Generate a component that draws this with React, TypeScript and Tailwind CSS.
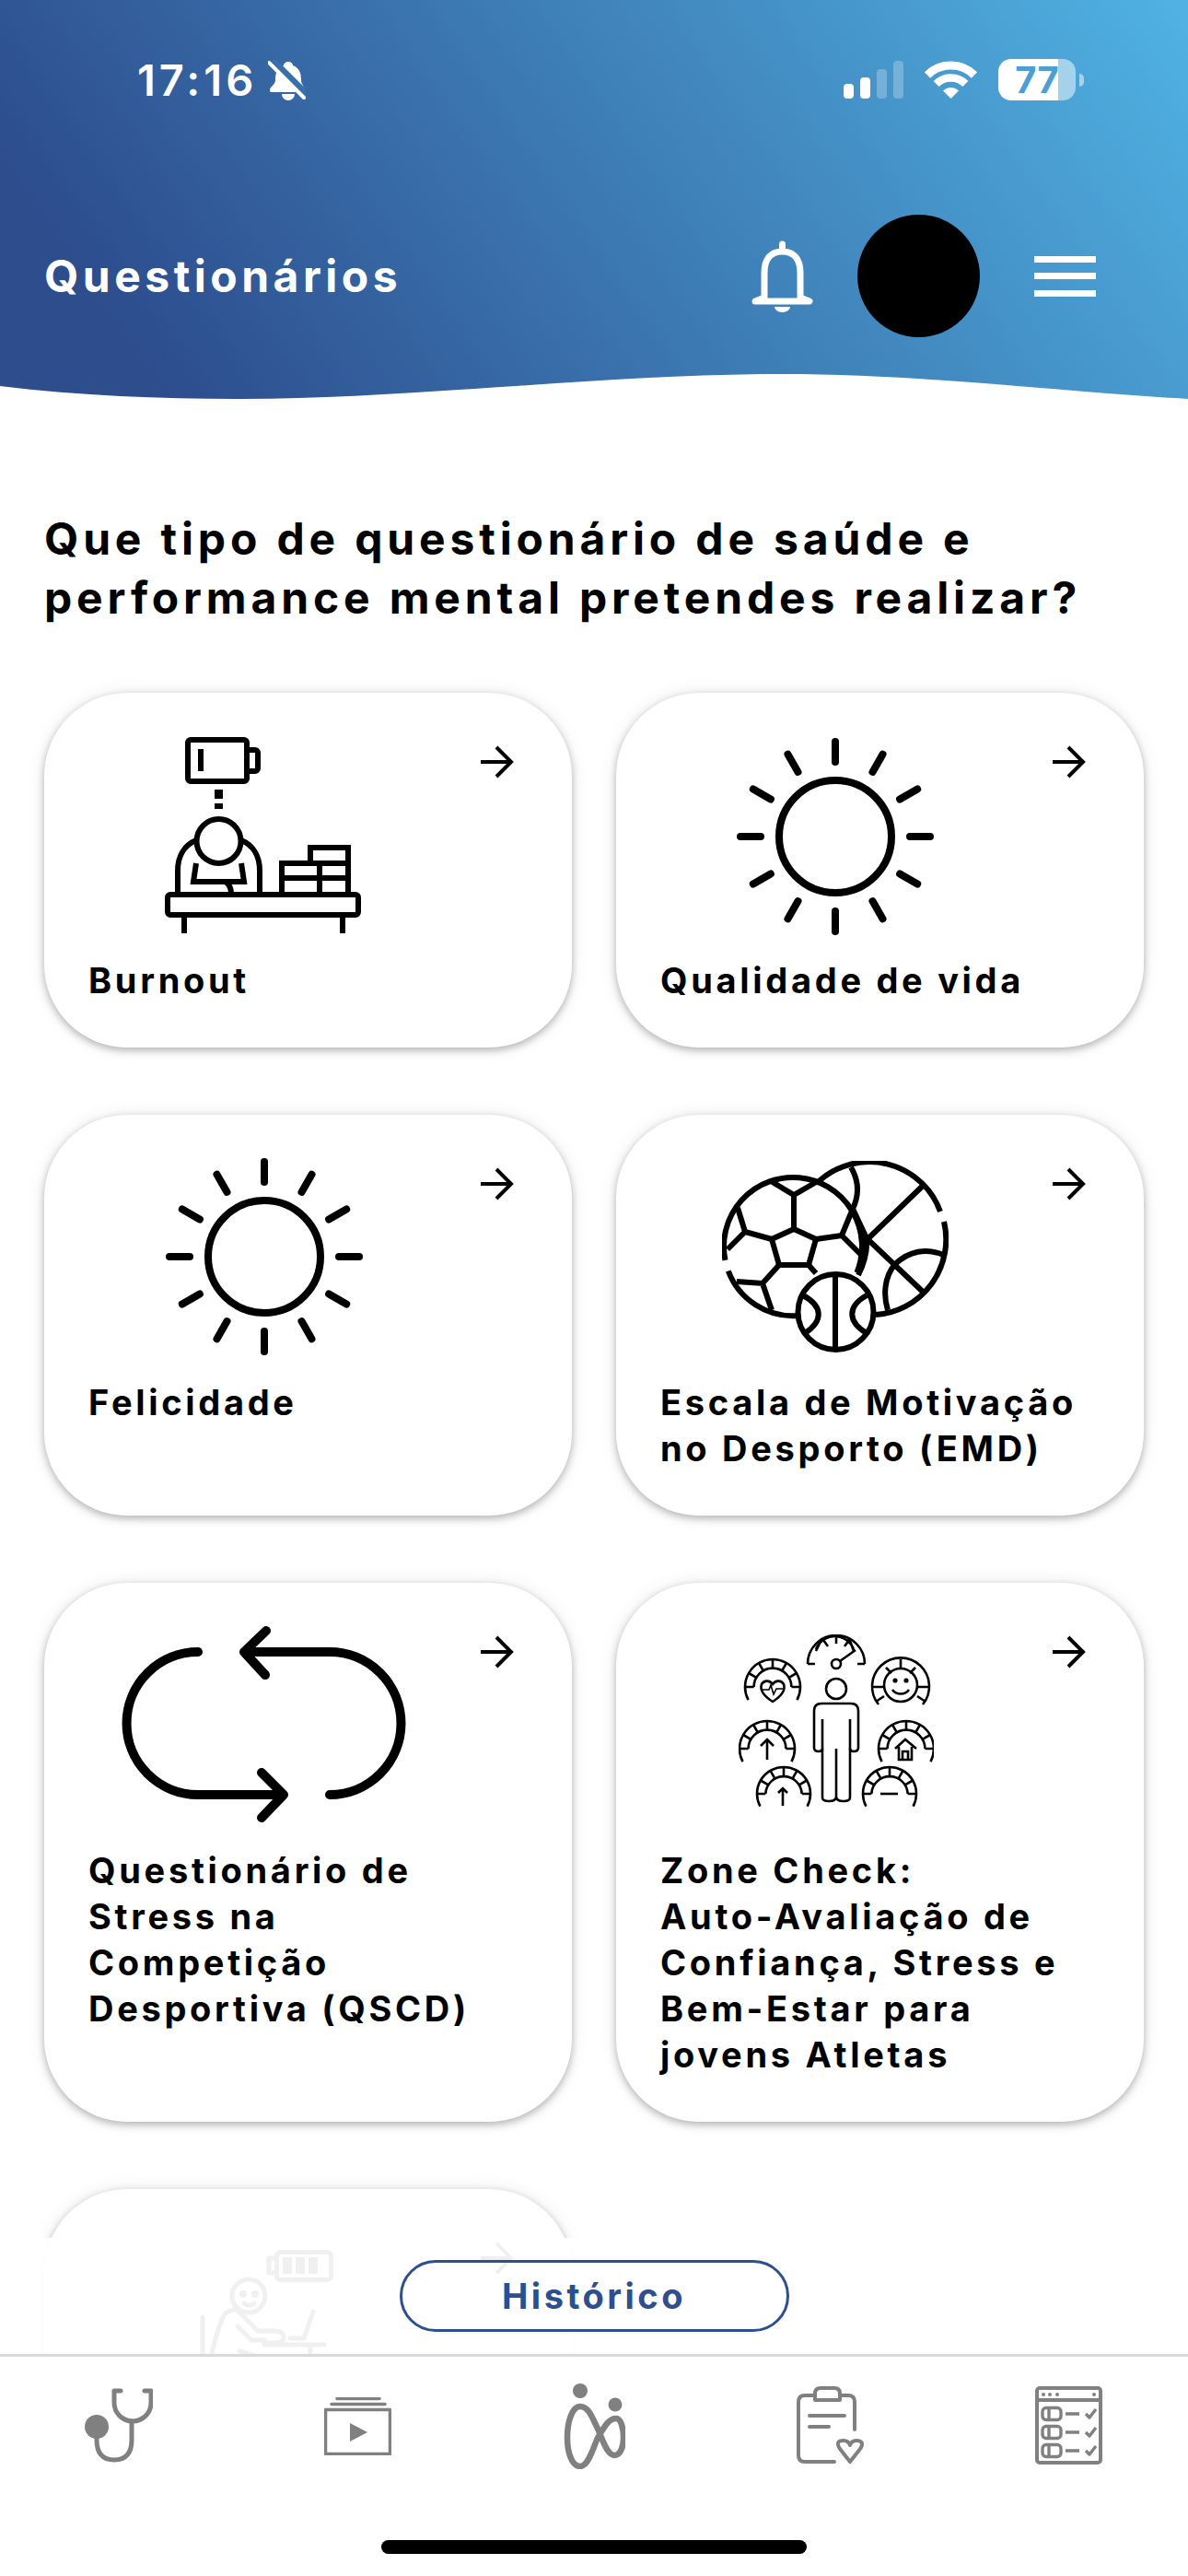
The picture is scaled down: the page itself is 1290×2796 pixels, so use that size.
const TITLE_FONT = "font-['Inter',sans-serif]"

const polar = (cx: number, cy: number, r: number, deg: number) => {
  const a = (deg * Math.PI) / 180
  return [cx + r * Math.cos(a), cy + r * Math.sin(a)].map((n) => n.toFixed(1)).join(' ')
}

function ArrowRight() {
  return (
    <svg viewBox="0 0 36 36" className="absolute right-[63px] top-[57px] h-[36px] w-[36px]" fill="none" stroke="#000" strokeWidth="4">
      <path d="M0 18H33M17 2L33 18L17 34" />
    </svg>
  )
}

function BurnoutIcon() {
  return (
    <svg viewBox="0 0 213 213" className="h-[213px] w-[213px]" fill="none" stroke="#000" strokeWidth="6">
      <rect x="25" y="3" width="64" height="45" rx="3" />
      <path d="M90 14H98a3 3 0 0 1 3 3V34a3 3 0 0 1-3 3H90" />
      <rect x="36" y="13" width="6" height="24" fill="#000" stroke="none" />
      <rect x="54" y="57" width="9" height="10" fill="#000" stroke="none" />
      <rect x="54" y="72" width="9" height="6" fill="#000" stroke="none" />
      <ellipse cx="58.5" cy="113" rx="24" ry="24" />
      <path d="M14 170V145C14 128 22 117 34 112M103 170V145C103 128 95 117 83 112" />
      <path d="M34 137L31 157H86L83 137M66 157C70 160 72 164 72 170" />
      <rect x="3" y="171" width="207" height="22" rx="3" />
      <path d="M21 195V213M193 195V213" />
      <path d="M127 170V137H168V170M127 153H168" />
      <path d="M158 137V120H199V170M168 137H199M168 153H199" />
    </svg>
  )
}

function SunIcon() {
  const rays = [0, 30, 60, 90, 120, 150, 180, 210, 240, 270, 300, 330]
  return (
    <svg viewBox="-108 -108 216 216" className="h-[216px] w-[216px]" fill="none" stroke="#000" strokeWidth="8" strokeLinecap="round">
      <circle r="61" />
      {rays.map((deg) => (
        <path key={deg} d={`M${polar(0, 0, 81, deg)}L${polar(0, 0, 103, deg)}`} />
      ))}
    </svg>
  )
}

function BallsIcon() {
  return (
    <svg viewBox="0 0 246 208" className="h-[208px] w-[246px]" fill="none" stroke="#000" strokeWidth="6">
      <path d="M105.6 21.7A82 82 0 0 1 237 55M241 66A82 82 0 0 1 167 167" />
      <path d="M82 168A75 75 0 0 1 6.800 119.500M3.500 107.900A75 75 0 1 1 146.400 121.400" />
      <path d="M78 74L102 85L94 113H62L54 85Z" />
      <path d="M78 74V37M53 22L78 37L104 22M54 85L25 77L17 51M25 77L6 96M102 85L130 81L142 52M130 81L151 102M62 113L44 133L16 131M44 133L54 162M94 113L102 122" />
      <path d="M140 7C149 22 149 37 142 52L157 84L218 142M217 28L157 86C158 100 154 112 148 124" />
      <path d="M240 102C222 94 203 98 188 112C176 126 175 146 180 162" />
      <circle cx="123.5" cy="164" r="41" fill="#fff" />
      <path d="M123 124V204M88 146C110 158 110 174 90 187M157 146C136 158 136 174 157 187" />
    </svg>
  )
}

function LoopIcon() {
  return (
    <svg viewBox="0 0 310 213" className="h-[213px] w-[310px]" fill="none" stroke="#000" strokeWidth="10" strokeLinecap="round" strokeLinejoin="round">
      <path d="M83 28A77.500 77.500 0 0 0 83 183H176M152 159L176 183L152 208" />
      <path d="M226 183A77.500 77.500 0 0 0 226 28H133M157 5L133 28L156 53" />
    </svg>
  )
}

function Gauge({ cx, cy, R, ext = 28 }: { cx: number; cy: number; R: number; ext?: number }) {
  const r = R * 0.68
  const ticks = [-150, -120, -90, -60, -30]
  return (
    <g>
      <path d={`M${polar(cx, cy, R, 180 - ext)}A${R} ${R} 0 1 1 ${polar(cx, cy, R, ext)}`} />
      <path d={`M${polar(cx, cy, r, 180)}A${r} ${r} 0 0 1 ${polar(cx, cy, r, 0)}`} />
      <path d={`M${cx - R} ${cy}H${cx - r}M${cx + r} ${cy}H${cx + R}`} />
      {ticks.map((deg) => (
        <path key={deg} d={`M${polar(cx, cy, r, deg)}L${polar(cx, cy, R, deg)}`} />
      ))}
    </g>
  )
}

function ZoneIcon() {
  return (
    <svg viewBox="0 0 212 189" className="h-[189px] w-[212px]" fill="none" stroke="#000" strokeWidth="2.6">
      <path d="M75 32A31 31 0 0 1 137 32M75 32H83M129 32H137" />
      <path d="M84 16A22 22 0 0 1 125 16M84 18L91 4M125 18L120 4M106 1V10M92 6L97 13M120 6L115 13" />
      <circle cx="106" cy="32" r="5" />
      <path d="M110 29L127 17" />
      <Gauge cx={37} cy={57} R={30} />
      <path d="M37 73C26 66 23 60 25 54C28 49 34 50 37 54C40 50 46 49 49 54C51 60 48 66 37 73Z" />
      <path d="M26 60H33L35 55L38 65L41 59H48" strokeWidth="1.6" />
      <path d="M152 76A31 31 0 1 1 200 76" />
      <circle cx="176" cy="55" r="18" />
      <path d="M146 57H158M194 57H207M158 67L149 73M194 67L203 73M176 27V37M160 36L166 42M192 36L186 42" />
      <circle cx="170" cy="50" r="1.3" fill="#000" />
      <circle cx="182" cy="50" r="1.3" fill="#000" />
      <path d="M167 60C171 66 181 66 185 60" />
      <Gauge cx={31} cy={124} R={30} />
      <path d="M31 136V114M24 121L31 114L38 121" />
      <Gauge cx={182} cy={124} R={30} />
      <path d="M170 124L181 114L193 124M174 122V136H188V122M178 136V127H184V136" />
      <Gauge cx={49} cy={173} R={29} />
      <path d="M48 186V167M43 172L48 167L53 172" />
      <Gauge cx={164} cy={173} R={29} />
      <path d="M154 173H173" />
      <ellipse cx="106" cy="59" rx="11" ry="11" />
      <path d="M91 92V177Q91 181 98 181Q106 181 106 176V124V176Q106 181 114 181Q121 181 121 177V92" />
      <path d="M91 124Q91 127 87 127Q82 127 82 123V83Q82 75 90 75H122Q130 75 130 83V123Q130 127 125 127Q121 127 121 124" />
    </svg>
  )
}

function GhostIcon() {
  return (
    <svg viewBox="0 0 150 150" className="h-[150px] w-[150px]" fill="none" stroke="#000" strokeWidth="5" strokeLinecap="round" strokeLinejoin="round">
      <rect x="85.5" y="4.5" width="59" height="30" rx="4" />
      <path d="M83 11H77V27H83" />
      <path d="M92 10H102V28H92ZM106 10H116V28H106ZM120 10H130V28H120Z" fill="#000" stroke="none" />
      <circle cx="55" cy="52" r="18" />
      <circle cx="49" cy="50" r="1.5" fill="#000" />
      <circle cx="62" cy="50" r="1.5" fill="#000" />
      <path d="M50 60C53 63 58 63 61 60" />
      <path d="M5 75V130M15 115C18 100 23 84 28 73C32 68 37 67 42 67L65 90H85Q93 91 93 97Q93 103 85 103H72" />
      <path d="M43 85L58 100H72M72 105H137M125 69L115 98H100M122 105V130M45 112L72 120" />
    </svg>
  )
}

function Stethoscope() {
  return (
    <svg viewBox="0 0 74 81" className="mt-[34px] h-[81px] w-[74px]" fill="none" stroke="#808080" strokeWidth="5" strokeLinejoin="round" strokeLinecap="round">
      <path d="M39 3H32V16A20 20 0 0 0 72 16V3H65" />
      <path d="M51 36V56Q51 78 32 78Q13 78 13 56V44" />
      <circle cx="13" cy="42" r="13" fill="#808080" stroke="none" />
    </svg>
  )
}

function VideoStack() {
  return (
    <svg viewBox="0 0 73 63" className="mt-[44px] h-[63px] w-[73px]" fill="none" stroke="#808080" strokeWidth="3.5" strokeLinejoin="round" strokeLinecap="round">
      <path d="M14 1.5H60M8 7.5H66" />
      <rect x="1.5" y="13.5" width="70" height="48" />
      <path d="M28 28L47 38L28 48Z" fill="#808080" stroke="none" />
    </svg>
  )
}

function BrandLogo() {
  return (
    <svg viewBox="0 0 67 93" className="mt-[29px] h-[93px] w-[67px]" fill="none">
      <circle cx="18" cy="8" r="8" fill="#808080" />
      <circle cx="56" cy="23" r="7.5" fill="#808080" />
      <path
        d="M18 25C28 25 32 40 37 49C42 60 47 78 55 78C62 78 65 68 65 59C65 48 62 38 57 38C48 38 43 50 37 59C32 70 27 90 18 90C9 90 4 75 4 59C4 42 9 25 18 25Z"
        stroke="#808080"
        strokeWidth="6.5"
      />
    </svg>
  )
}

function ClipboardHeart() {
  return (
    <svg viewBox="0 0 73 85" className="mt-[32px] h-[85px] w-[73px]" fill="none" stroke="#808080" strokeWidth="4" strokeLinecap="round" strokeLinejoin="round">
      <path d="M20 10H9Q2 10 2 17V75Q2 82 9 82H41M47 10H56Q63 10 63 17V47" />
      <path d="M20 15V8Q20 2 26 2H41Q47 2 47 8V15Z" />
      <path d="M14 32H52M14 44H35" />
      <path d="M58 82L47 68C42 60 47 59 51 59C54 59 57 61 58 64C59 61 62 59 65 59C69 59 74 61 69 68Z" />
    </svg>
  )
}

function Checklist() {
  const rows = [30, 50, 70]
  return (
    <svg viewBox="0 0 73 85" className="mt-[32px] h-[85px] w-[73px]" fill="none" stroke="#808080" strokeWidth="4" strokeLinejoin="round">
      <rect x="2" y="2" width="69" height="81" rx="3" />
      <path d="M2 15H71" />
      <g fill="#808080" stroke="none">
        <circle cx="9" cy="9" r="2" />
        <circle cx="16" cy="9" r="2" />
        <circle cx="24" cy="9" r="2" />
        <circle cx="64" cy="9" r="2" />
      </g>
      {rows.map((y) => (
        <g key={y}>
          <rect x="8" y={y - 6.5} width="20" height="13" rx="4" strokeWidth="3.4" />
          <path d={`M15 ${y - 6}V${y + 6}M33 ${y}H48`} strokeWidth="3.4" />
          <path d={`M55 ${y}L59 ${y + 4}L66 ${y - 5}`} strokeWidth="3.4" />
        </g>
      ))}
    </svg>
  )
}

function StatusBar() {
  return (
    <div className="mt-[64px] flex h-[45px] items-center justify-between pl-[149px] pr-[113px] text-white">
      <div className="flex items-center gap-[12px]">
        <span className="font-['Inter',sans-serif] text-[47px] font-semibold leading-[45px] tracking-[4px]">17:16</span>
        <svg viewBox="0 0 41 44" className="h-[44px] w-[41px]">
          <path
            d="M22 2c-3 0-5 2-5 4C9 9 8 16 8 22C8 27 2 29 2 33c0 2 1 2 3 2H37c2 0 3 0 3-2C40 29 36 27 36 22C36 16 35 9 27 6c0-2-2-4-5-4zM15 37a7 7 0 0 0 14 0z"
            fill="#fff"
          />
          <path d="M4 0L42 38" stroke="#3a70aa" strokeWidth="8" />
          <path d="M1 3L39 41" stroke="#fff" strokeWidth="4" strokeLinecap="round" />
        </svg>
      </div>
      <div className="flex items-center">
        <div className="flex h-[41px] items-end gap-[7px]">
          <span className="h-[16px] w-[11px] rounded-[4px] bg-white" />
          <span className="h-[23px] w-[11px] rounded-[4px] bg-white" />
          <span className="h-[32px] w-[11px] rounded-[4px] bg-white/25" />
          <span className="h-[41px] w-[11px] rounded-[4px] bg-white/25" />
        </div>
        <svg viewBox="0 0 57 41" className="ml-[23px] h-[41px] w-[57px]" fill="none" stroke="#fff">
          <path d="M3 15.5A36 36 0 0 1 54 15.5" strokeWidth="9" />
          <path d="M12.6 25.1A22.5 22.5 0 0 1 44.4 25.1" strokeWidth="8.5" />
          <path d="M28.5 41L20 32.5A12 12 0 0 1 37 32.5Z" fill="#fff" stroke="none" />
        </svg>
        <div className="ml-[23px] flex h-[45px] w-[84px] items-center justify-center rounded-[14px] bg-[linear-gradient(90deg,#fff_77%,rgba(255,255,255,0.5)_77%)] font-['Inter',sans-serif] text-[40px] font-bold leading-none text-[#4c9fd3]">
          77
        </div>
        <span className="ml-[4px] h-[14px] w-[5px] rounded-r-full bg-white/50" />
      </div>
    </div>
  )
}

function Header() {
  return (
    <header className="relative h-[440px] shrink-0 bg-[linear-gradient(55deg,#2d4d8d_12%,#50b2e3_100%)]">
      <StatusBar />
      <div className="mt-[124px] flex h-[133px] items-center justify-between pl-[48px] pr-[100px]">
        <h1 className="font-['Inter',sans-serif] text-[48px] font-bold tracking-[4.5px] text-white">Questionários</h1>
        <div className="flex items-center">
          <svg viewBox="0 0 67 78" className="h-[78px] w-[67px]" fill="none" stroke="#fff" strokeWidth="7">
            <path d="M33.5 4V10M14 62V35C14 20 21 12 33.5 12C46 12 53 20 53 35V62L63 66H4Z" strokeLinejoin="round" strokeLinecap="round" />
            <path d="M25 72a8.500 6 0 0 0 17 0z" fill="#fff" stroke="none" />
          </svg>
          <div className="ml-[48px] h-[133px] w-[133px] rounded-full bg-black" />
          <div className="ml-[59px] flex h-[44px] w-[67px] flex-col justify-between">
            <span className="h-[7px] bg-white" />
            <span className="h-[7px] bg-white" />
            <span className="h-[7px] bg-white" />
          </div>
        </div>
      </div>
      <svg viewBox="0 400 1290 40" preserveAspectRatio="none" className="absolute bottom-0 left-0 h-[40px] w-full">
        <path d="M0 419C90 430 180 433 263 433C450 433 650 406 848 406C1000 406 1150 425 1290 433V440H0Z" fill="#fff" />
      </svg>
    </header>
  )
}

function Card({ lines, iconClass, children }: { lines: string[]; iconClass: string; children: React.ReactNode }) {
  return (
    <div className="relative rounded-[90px] bg-white px-[48px] pb-[48px] shadow-[0_3px_9px_rgba(0,0,0,0.28),0_0_22px_rgba(0,0,0,0.07)]">
      <ArrowRight />
      <div className={iconClass}>{children}</div>
      <p className={`${TITLE_FONT} text-[38px] font-bold leading-[50px] tracking-[3.7px] text-black`}>
        {lines.map((line) => (
          <span key={line} className="block whitespace-nowrap">
            {line}
          </span>
        ))}
      </p>
    </div>
  )
}

function BottomBar() {
  return (
    <div className="absolute inset-x-0 bottom-0">
      <div className="flex h-[126px] justify-center bg-white/[0.94] pt-[24px]">
        <button className="h-[78px] w-[423px] rounded-full border-[3px] border-[#2c4f90] font-['Inter',sans-serif] text-[38px] font-bold tracking-[3.5px] text-[#2c4f90]">
          Histórico
        </button>
      </div>
      <nav className="h-[241px] border-t-[3px] border-[#d9d9d9] bg-white pl-[92px] pr-[93px]">
        <div className="flex items-start justify-between">
          <Stethoscope />
          <VideoStack />
          <BrandLogo />
          <ClipboardHeart />
          <Checklist />
        </div>
      </nav>
      <div className="absolute bottom-[24px] left-[414px] h-[15px] w-[462px] rounded-full bg-black" />
    </div>
  )
}

export default function App() {
  return (
    <div className="relative flex h-[2796px] w-[1290px] flex-col overflow-hidden bg-white">
      <Header />
      <main className="px-[48px] pt-[113px]">
        <h2 className="mb-[71px] font-['Inter',sans-serif] text-[48px] font-bold leading-[64px] tracking-[4.85px] text-black">
          Que tipo de questionário de saúde e<br />
          performance mental pretendes realizar?
        </h2>
        <div className="grid grid-cols-2 gap-x-[48px] gap-y-[73px]">
          <Card lines={['Burnout']} iconClass="ml-[83px] h-[287px] pt-[48px]">
            <BurnoutIcon />
          </Card>
          <Card lines={['Qualidade de vida']} iconClass="ml-[82px] h-[287px] pt-[48px]">
            <SunIcon />
          </Card>
          <Card lines={['Felicidade']} iconClass="ml-[83px] h-[287px] pt-[46px]">
            <SunIcon />
          </Card>
          <Card lines={['Escala de Motivação', 'no Desporto (EMD)']} iconClass="ml-[67px] h-[287px] pt-[50px]">
            <BallsIcon />
          </Card>
          <Card lines={['Questionário de', 'Stress na', 'Competição', 'Desportiva (QSCD)']} iconClass="ml-[36px] h-[287px] pt-[47px]">
            <LoopIcon />
          </Card>
          <Card
            lines={['Zone Check:', 'Auto-Avaliação de', 'Confiança, Stress e', 'Bem-Estar para', 'jovens Atletas']}
            iconClass="ml-[85px] h-[287px] pt-[56px]"
          >
            <ZoneIcon />
          </Card>
          <Card lines={['Bem-estar']} iconClass="ml-[119px] h-[287px] pt-[64px]">
            <GhostIcon />
          </Card>
        </div>
      </main>
      <BottomBar />
    </div>
  )
}
